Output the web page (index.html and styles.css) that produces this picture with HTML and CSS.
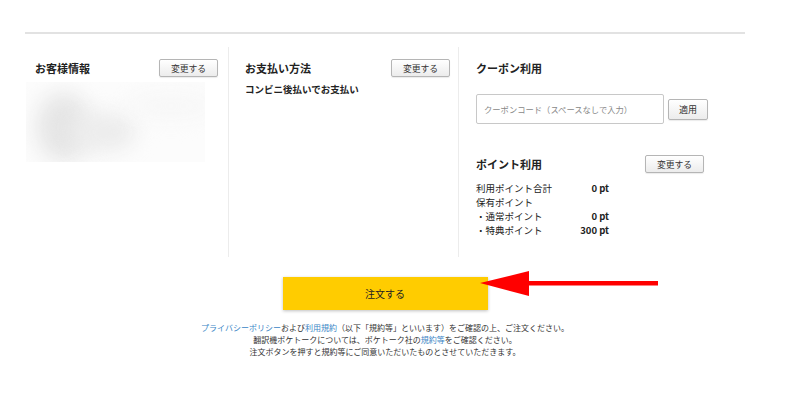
FILE: index.html
```html
<!DOCTYPE html>
<html lang="ja">
<head>
<meta charset="utf-8">
<title>注文確認</title>
<link rel="stylesheet" href="styles.css">
</head>
<body>
<div class="page">
  <div class="cols">
    <section class="col col-customer">
      <div class="head-row">
        <h2 class="title">お客様情報</h2>
        <button class="btn">変更する</button>
      </div>
      <div class="blurred"><div class="blob b1"></div><div class="blob b2"></div><div class="blob b3"></div></div>
    </section>
    <section class="col col-pay">
      <div class="head-row">
        <h2 class="title">お支払い方法</h2>
        <button class="btn">変更する</button>
      </div>
      <p class="pay-text">コンビニ後払いでお支払い</p>
    </section>
    <section class="col col-coupon">
      <div class="head-row plain">
        <h2 class="title">クーポン利用</h2>
      </div>
      <div class="coupon-row">
        <div class="coupon-input">クーポンコード（スペースなしで入力）</div>
        <button class="btn btn-apply">適用</button>
      </div>
      <div class="head-row points-head">
        <h2 class="title">ポイント利用</h2>
        <button class="btn">変更する</button>
      </div>
      <div class="points">
        <div class="prow"><span>利用ポイント合計</span><b>0 pt</b></div>
        <div class="prow"><span>保有ポイント</span></div>
        <div class="prow"><span>・通常ポイント</span><b>0 pt</b></div>
        <div class="prow"><span>・特典ポイント</span><b>300 pt</b></div>
      </div>
    </section>
  </div>
  <div class="order">
    <button class="order-btn">注文する</button>
  </div>
  <div class="notes">
    <p><a>プライバシーポリシー</a>および<a>利用規約</a>（以下「規約等」といいます）をご確認の上、ご注文ください。</p>
    <p>翻訳機ポケトークについては、ポケトーク社の<a>規約等</a>をご確認ください。</p>
    <p>注文ボタンを押すと規約等にご同意いただいたものとさせていただきます。</p>
  </div>
  <svg class="arrow" width="190" height="34" viewBox="0 0 190 34">
    <polygon points="2,14 51,2 51,27" fill="#ff0000"/>
    <rect x="48" y="12" width="132" height="4.5" fill="#ff0000"/>
  </svg>
</div>
</body>
</html>
```

FILE: styles.css
```css
* { box-sizing: border-box; }
html, body { margin: 0; padding: 0; background: #fff; }
body {
  font-family: "Noto Sans CJK JP", "Noto Sans", sans-serif;
  color: #222;
  width: 800px;
  height: 400px;
  overflow: hidden;
}
.page {
  position: relative;
  padding-top: 32px;
}
.cols {
  margin-left: 25px;
  width: 720px;
  border-top: 2px solid #e2e2e2;
  display: grid;
  grid-template-columns: 203px 230px 287px;
}
.col {
  margin-top: 13px;
  height: 210px;
  padding-top: 12px;
}
.col-customer { padding-left: 10px; padding-right: 10px; }
.col-pay { border-left: 1px solid #ececec; padding-left: 16px; padding-right: 8px; }
.col-coupon { border-left: 1px solid #ececec; padding-left: 17px; padding-right: 10px; }
.head-row {
  display: flex;
  align-items: center;
  justify-content: space-between;
  height: 18px;
}
.title {
  margin: 0;
  font-size: 11px;
  font-weight: 700;
  line-height: 18px;
}
.btn {
  font-family: inherit;
  font-size: 8.8px;
  color: #333;
  width: 59px;
  height: 18px;
  padding: 0;
  border: 1px solid #b5b5b5;
  border-radius: 2px;
  background: linear-gradient(#ffffff, #ececec);
  box-shadow: 0 1px 1px rgba(0,0,0,0.08);
}
.blurred {
  position: relative;
  margin-top: 5px;
  margin-left: -9px;
  width: 179px;
  height: 80px;
  overflow: hidden;
  background: #fcfcfc;
}
.blob { position: absolute; border-radius: 50%; filter: blur(10px); }
.b1 { left: 10px; top: 10px; width: 55px; height: 70px; background: #e6e6e6; }
.b2 { left: 45px; top: 30px; width: 65px; height: 40px; background: #ececec; }
.b3 { left: 100px; top: 10px; width: 90px; height: 28px; background: #f7f7f7; }
.pay-text {
  margin: 5px 0 0;
  font-size: 9.5px;
  font-weight: 700;
  line-height: 14px;
}
.coupon-row {
  margin-top: 17px;
  display: flex;
  align-items: center;
  gap: 4px;
}
.coupon-input {
  width: 188px;
  height: 30px;
  border: 1px solid #c8c8c8;
  border-radius: 2px;
  padding-left: 7px;
  font-size: 8.3px;
  line-height: 28px;
  color: #888;
  white-space: nowrap;
}
.btn-apply { width: 40px; height: 21px; font-size: 9px; }
.points-head { margin-top: 31px; width: 228px; }
.points { margin-top: 8px; width: 133px; }
.prow {
  display: flex;
  justify-content: space-between;
  font-size: 9.5px;
  line-height: 14px;
}
.prow b { font-weight: 700; }
.order {
  display: flex;
  justify-content: center;
  margin-left: 25px;
  width: 720px;
  margin-top: 20px;
}
.order-btn {
  font-family: inherit;
  width: 205px;
  height: 33px;
  border: none;
  background: #ffcc00;
  color: #222;
  font-size: 10px;
  box-shadow: 0 1px 3px rgba(0,0,0,0.25);
}
.notes {
  margin-left: 25px;
  width: 720px;
  margin-top: 12px;
  text-align: center;
  font-size: 8px;
  line-height: 12px;
  color: #333;
}
.notes p { margin: 0; }
.notes a { color: #3b86c6; }
.arrow {
  position: absolute;
  left: 478px;
  top: 269px;
}
```
